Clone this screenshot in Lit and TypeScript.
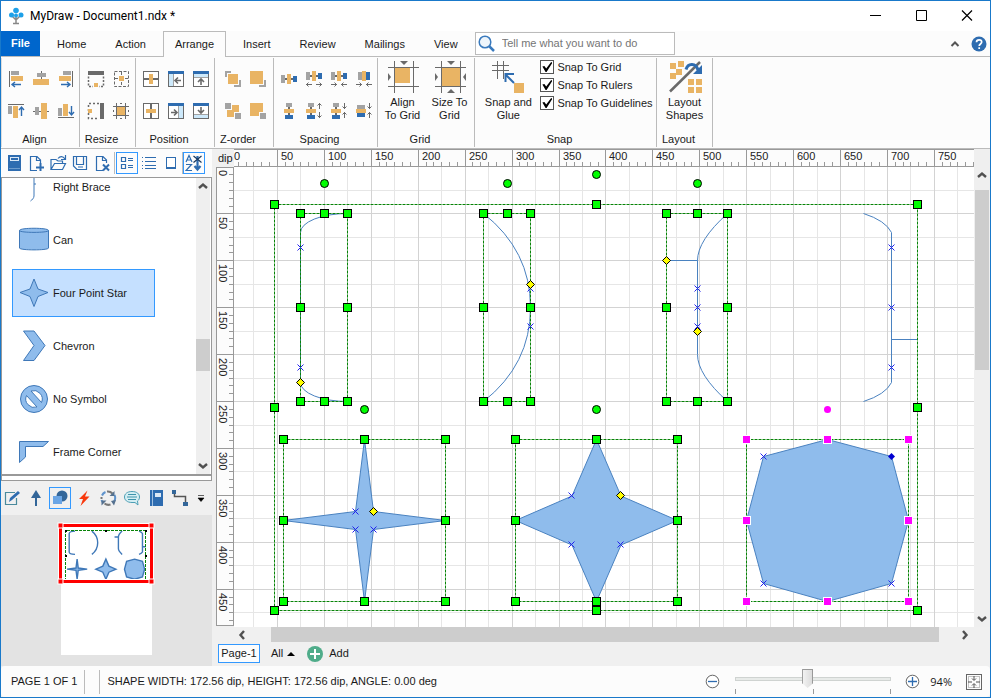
import { LitElement, html, svg, css, nothing } from "lit";
import { customElement, state } from "lit/decorators.js";
import { classMap } from "lit/directives/class-map.js";

const O = "#e9b464";
const G = "#a3a3a3";
const D = "#6a6a6a";
const B = "#2e6cb0";
const L = "#cde9fb";

const r = (x: number, y: number, w: number, h: number, fill: string) =>
  svg`<rect x=${x} y=${y} width=${w} height=${h} fill=${fill}></rect>`;
const line = (d: string, stroke: string, width = 1) =>
  svg`<path d=${d} fill="none" stroke=${stroke} stroke-width=${width}></path>`;
const icon = (size: number, body: unknown) =>
  html`<svg class="ic" width=${size} height=${size} viewBox="0 0 ${size} ${size}" aria-hidden="true">${body}</svg>`;

const frame = (top: boolean) => [
  svg`<rect x="1.5" y="1.5" width="15" height="15" fill="#fff" stroke=${D}></rect>`,
  top ? r(1, 1, 16, 3, B) : nothing,
];

const arrowsOut = line("M1 14.5H7M3.5 12.5l-2 2 2 2M11 14.5H17M14.5 12.5l2 2-2 2", D);
const arrowsIn = line("M1 14.5H7M4.5 12.5l2 2-2 2M11 14.5H17M13.5 12.5l-2 2 2 2", D);
const arrowsOutV = line("M14.5 1V7M12.5 3.5l2-2 2 2M14.5 10V16M12.5 13.5l2 2 2-2", D);
const arrowsInV = line("M14.5 1V7M12.5 4.5l2 2 2-2M14.5 10V16M12.5 12.5l2-2 2 2", D);

const ICONS: Record<string, unknown> = {
  alignLeft: [r(2, 1, 1, 16, D), r(4, 1, 8, 4, G), r(4, 6, 12, 5, O), line("M4.5 14.5H14M8 12l-3 2.5 3 2.5", B, 1.4)],
  alignCenter: [r(9, 1, 1, 14, D), r(5, 3, 9, 4, G), r(1, 9, 16, 6, O)],
  alignRight: [r(15, 1, 1, 16, D), r(6, 1, 8, 4, G), r(2, 6, 12, 5, O), line("M4 14.5H13.5M10 12l3 2.5-3 2.5", B, 1.4)],
  alignTop: [r(1, 2, 16, 1, D), r(1, 4, 4, 8, G), r(6, 4, 5, 12, O), line("M14.5 14V5M12 8l2.5-3L17 8", B, 1.4)],
  alignMiddle: [r(1, 9, 16, 1, D), r(3, 5, 4, 8, G), r(9, 1, 6, 16, O)],
  alignBottom: [r(1, 15, 16, 1, D), r(1, 6, 4, 8, G), r(6, 2, 5, 12, O), line("M14.5 4V13M12 10l2.5 3L17 10", B, 1.4)],
  sameWidth: [r(1, 1, 16, 4, D), svg`<path d="M1.5 6.500V16.500H6M16.500 6.500V16.500H12" fill="none" stroke=${D} stroke-width="1.500" stroke-dasharray="2 1.500"></path>`, r(7, 13, 4, 4, O)],
  sameSize: [svg`<rect x="2.5" y="1.5" width="14" height="15" fill="none" stroke=${D} stroke-dasharray="3 1.5"></rect>
    <path d="M9.5 2V16M3 8.5H16" stroke=${D} stroke-dasharray="3 2"></path>`, r(7, 6, 5, 5, O)],
  sameHeight: [r(13, 1, 4, 16, D), svg`<path d="M12 1.5H1.5V16.5H12" fill="none" stroke=${D} stroke-width="1.5" stroke-dasharray="2 2"></path>`, r(1, 7, 4, 4, O)],
  fitGrid: [line("M1 4.5H17M1 13.5H17M4.5 1V17M13.5 1V17", D), r(5, 5, 8, 8, O), r(8, 1, 2, 1, D), r(8, 16, 2, 1, D), r(1, 8, 1, 2, D), r(16, 8, 1, 2, D)],
  centerH: [frame(false), r(2, 8, 14, 2, D), r(7, 4, 4, 10, O)],
  dockLeft: [frame(true), r(2, 4, 4, 12, L), r(6, 4, 1, 12, G), line("M14 10.5H8M11 7.5l-3 3 3 3", D, 1.6)],
  dockTop: [frame(true), r(2, 4, 14, 3, L), r(2, 7, 14, 1, G), line("M9 15V9M6 12l3-3 3 3", D, 1.6)],
  centerV: [frame(false), r(8, 2, 2, 14, D), r(4, 7, 10, 4, O)],
  dockRight: [frame(true), r(12, 4, 4, 12, L), r(11, 4, 1, 12, G), line("M4 10.5H10M7 7.5l3 3-3 3", D, 1.6)],
  dockBottom: [frame(true), r(2, 13, 14, 3, L), r(2, 12, 14, 1, G), line("M9 5V11M6 8l3 3 3-3", D, 1.6)],
  front: [r(1, 1, 6, 6, G), r(10, 10, 7, 7, G), r(3, 3, 12, 12, "#fcfcfc"), r(4, 4, 10, 10, O)],
  forward: [r(10, 10, 7, 7, G), r(1, 1, 14, 14, "#fcfcfc"), r(1, 1, 13, 13, O)],
  back: [r(3, 3, 12, 12, O), r(0, 0, 8, 8, "#fcfcfc"), r(10, 10, 8, 8, "#fcfcfc"), r(1, 1, 6, 6, G), r(11, 11, 6, 6, G)],
  backward: [r(1, 1, 13, 13, O), r(10, 10, 8, 8, "#fcfcfc"), r(11, 11, 6, 6, G)],
  spaceH: [r(5, 8, 8, 2, D), r(1, 5, 4, 8, G), r(7, 4, 4, 10, O), r(13, 6, 4, 6, B)],
  growH: [r(5, 5, 8, 2, D), r(1, 2, 4, 8, G), r(7, 1, 4, 10, O), r(13, 3, 4, 6, B), arrowsOut],
  shrinkH: [r(5, 5, 8, 2, D), r(1, 2, 4, 8, G), r(7, 1, 4, 10, O), r(13, 3, 4, 6, B), arrowsIn],
  removeH: [r(3, 2, 4, 8, G), r(7, 1, 4, 10, O), r(11, 2, 4, 8, B), arrowsIn],
  spaceV: [r(8, 5, 2, 8, D), r(6, 1, 6, 4, G), r(4, 7, 10, 4, O), r(5, 13, 8, 4, B)],
  growV: [r(5, 5, 2, 8, D), r(3, 1, 6, 4, G), r(1, 7, 10, 4, O), r(2, 13, 8, 4, B), arrowsOutV],
  shrinkV: [r(5, 5, 2, 8, D), r(3, 1, 6, 4, G), r(1, 7, 10, 4, O), r(2, 13, 8, 4, B), arrowsInV],
  removeV: [r(2, 3, 8, 4, G), r(1, 7, 10, 4, O), r(2, 11, 8, 4, B), arrowsInV],
};

const gridLines = line("M1 6.5H32M1 25.5H32M7.5 0V32M26.5 0V32", D);
const BIG: Record<string, unknown> = {
  alignGrid: [gridLines, r(8, 7, 15, 15, O), svg`<path d="M13 0h8l-4 4zM1 12v8l3-4z" fill=${D}></path>`],
  sizeGrid: [gridLines, r(8, 7, 18, 18, O), svg`<path d="M13 0h8l-4 4zM1 12v8l3-4zM32 12v8l-3-4zM13 32h8l-4-4z" fill=${D}></path>`],
  snap: [line("M0 4.5H17M0 9.5H17M5.5 0V18M11.5 0V18", D), line("M22 22L14 14M13.5 21V13H22", B, 2), r(22, 22, 10, 10, O)],
  layout: [r(1, 2, 6, 6, O), r(9, 0, 6, 6, O), r(7, 8, 6, 6, O), r(1, 12, 6, 6, O), r(19, 18, 6, 6, O), r(27, 18, 6, 6, O), r(19, 26, 6, 6, O), r(27, 26, 6, 6, O),
    line("M1 30.5L31 1", D, 2.5), line("M17 8.5C19 1.5 27 2 29 9", B, 3), svg`<path d="M33 4V13H24z" fill=${B}></path>`],
};

const doc = line("M9 15.5H2.5V1.5H9L12.5 5V8M8.5 1.5V5.5H12.5", B, 1.2);
const TOOLS: Record<string, unknown> = {
  book: [r(2, 0, 13, 16, B), r(4, 2, 9, 4, "#dbe8f5"), r(5, 3, 7, 2, B), r(3, 13, 11, 1, "#6d9bcc")],
  newDoc: [doc, line("M8 12.5H16M12.5 8V16", B, 2)],
  open: [line("M1 14.5V4.5H6L8 6H12.5V8M1 14.5L4.5 8.5H15.5L12.5 14.5zM8 3.5C10 1 13 1 15 4M15.5 0V4.5H11", B, 1.2)],
  save: [line("M1.5 1.5H14.5V14.5H5L1.5 11zM4.5 1.5V9.5H11.5V1.5M6 12H11", B, 1.2)],
  closeDoc: [doc, line("M9 9.5L15 15.5M15 9.5L9 15.5", B, 2)],
  details: [line("M2.5 2.5h4v4h-4zM2.5 9.5h4v4h-4z", B, 1.2), line("M9 3.5h5M9 5.5h5M9 10.5h5M9 12.5h5", B)],
  list: [line("M4 2.5h11M4 6.5h11M4 10.5h11M4 13.5h11", B, 1), line("M1 2.5h1M1 6.5h1M1 10.5h1M1 13.5h1", B, 1)],
  square: [r(3, 2, 10, 12, B), r(4, 3, 8, 9, "#fff")],
  sort: [line("M0 7L3 0.500L6 7M1 5H5M0 9.500H5.500L0 15.500H6", B, 1.2), line("M11.500 1V14M8.500 11l3 3.500 3-3.500", B, 2.2), line("M7.500 1l8 6.500M15.500 1L7.500 7.500", "#17375e", 1.2)],
  edit: [line("M11 2.5H1.5V14.5H12.5V8", "#4a8a9c", 1.2), svg`<path d="M5 12l1-4 8-7 2 2-8 7z" fill=${B}></path>`],
  pointer: [svg`<path d="M8 0l5 8H3z" fill="#336699"></path>`, r(7, 5, 2, 11, "#336699")],
  shapes: [svg`<circle cx="10" cy="6" r="5.500" fill="#336699"></circle>`, r(1, 6, 9, 8, "#6aa5e5")],
  flash: [svg`<path d="M11.500 0.500L3 9h4L4.500 16l9-9.500H9z" fill="#f8380c"></path>`],
  cycle: [svg`<path d="M2 5.500A6.500 6.500 0 0 1 5.500 2M14.500 5A6.500 6.500 0 0 1 14 11.500M1.500 10A6.500 6.500 0 0 0 3 12.500" fill="none" stroke="#5f93cc" stroke-width="2"></path>
    <path d="M7 1.500A6.500 6.500 0 0 1 12.500 3.500M10.500 14.500A6.500 6.500 0 0 1 4.500 13.500M1.500 7V9" fill="none" stroke="#777" stroke-width="2"></path>
    <path d="M14.500 1V6H9.500zM16 10L14 15.500 11 11zM1.500 15.500V10.500H6.500z" fill="#55718f"></path>`],
  chat: [svg`<path d="M8 1.500C3 1.500.5 4 .5 7S3 12.500 8 12.500h3l3 2.500-.5-4C15 10 15.500 8.500 15.500 7 15.500 4 13 1.500 8 1.500z" fill="#d4eef3" stroke="#4e9fb5"></path>`, line("M4 4.500h8M3 7h10M4 9.500h8", "#3d93ab", 1.2)],
  note: [r(2, 0, 13, 16, B), r(4, 0, 1, 16, "#9fc0e2"), r(7, 3, 6, 4, "#dbe8f5")],
  link: [line("M2.500 2.500V6.500H13.500V13.500", "#555", 1.5), r(0, 0, 4, 4, "#336699"), r(11, 12, 5, 4, "#336699")],
};

const SKY = "#8fbcec";
const EDGE = "#3f78b8";
const STENCIL: { name: string; art: unknown }[] = [
  { name: "Right Brace", art: line("M13 2C14 4 15 6 15 8V15H17M15 15V27C15 29 13 31 11.500 32", EDGE) },
  { name: "Can", art: svg`<path d="M.5 8.500C.5 5.500 29.500 5.500 29.500 8.500V26C29.500 28.500.5 28.500.5 26z" fill=${SKY} stroke=${EDGE}></path><path d="M.5 8.500C.5 11 29.500 11 29.500 8.500" fill="none" stroke=${EDGE}></path>` },
  { name: "Four Point Star", art: svg`<path d="M15 4L19 14 29 17.500 19 21.500 15 31.500 11 21.500 1 17.500 11 14z" fill=${SKY} stroke=${EDGE}></path>` },
  { name: "Chevron", art: svg`<path d="M4.500 3H15L26 17.500 15 32.500H4.500L15 17.500z" fill=${SKY} stroke=${EDGE}></path>` },
  { name: "No Symbol", art: svg`<circle cx="15" cy="18" r="13.500" fill=${SKY} stroke=${EDGE}></circle>
    <path d="M12 10A8.500 8.500 0 0 1 22.500 21.500zM7.500 14.500A8.500 8.500 0 0 0 18 26z" fill="#fff" stroke=${EDGE}></path>` },
  { name: "Frame Corner", art: svg`<path d="M.5 7.500H29.500L24 12.500H6.500V23L.5 28.500z" fill=${SKY} stroke=${EDGE}></path>` },
];

/* Drawing surface geometry */
const STEP = 46.93;
const ORIGIN_X = -4;
const ORIGIN_Y = -0.6;

type P = [number, number];
const poly = (pts: P[]) => "M" + pts.map(([x, y]) => `${x} ${y}`).join("L") + "Z";
const star = (cx: number, cy: number, R: number, i: number) =>
  poly([[cx, cy - R], [cx + i, cy - i], [cx + R, cy], [cx + i, cy + i], [cx, cy + R], [cx - i, cy + i], [cx - R, cy], [cx - i, cy - i]]);

const OPEN_PATHS = [
  "M113 46A47 19 0 0 0 66 65V215A47 19 0 0 0 113 234",
  "M249 46Q296 83 296 140Q296 197 249 234",
  "M493 46Q463 73 463 93V187Q463 207 493 234M432 93H463",
  "M629 46Q651 53 657 65V215Q651 227 629 234M657 172H683",
];
const SOLID_PATHS = [
  star(130, 353, 81, 9),
  star(362, 353, 81, 24.5),
  poly([[593, 272], [657, 289], [674, 353], [657, 416], [593, 434], [529, 416], [512, 353], [529, 289]]),
];
const drawing = () => svg`
  ${OPEN_PATHS.map((d) => svg`<path class="open" d=${d}></path>`)}
  ${SOLID_PATHS.map((d) => svg`<path class="solid" d=${d}></path>`)}`;

const BOXES = [[40, 37, 643, 406], [66, 46, 47, 188], [249, 46, 47, 188], [432, 46, 61, 188], [49, 272, 162, 162], [281, 272, 162, 162], [512, 272, 162, 162]];
const HANDLES: P[] = [
  [40, 37], [362, 37], [683, 37], [40, 240], [683, 240], [40, 443], [362, 443], [683, 443],
  [66, 46], [90, 46], [113, 46], [66, 140], [113, 140], [66, 234], [90, 234], [113, 234],
  [249, 46], [273, 46], [296, 46], [249, 140], [296, 140], [249, 234], [273, 234], [296, 234],
  [432, 46], [463, 46], [493, 46], [432, 140], [493, 140], [432, 234], [463, 234], [493, 234],
  [49, 272], [130, 272], [211, 272], [49, 353], [211, 353], [49, 434], [130, 434], [211, 434],
  [281, 272], [362, 272], [443, 272], [281, 353], [443, 353], [281, 434], [362, 434], [443, 434],
];
const PINK: P[] = [[512, 272], [593, 272], [674, 272], [512, 353], [674, 353], [512, 434], [593, 434], [674, 434]];
const KNOBS: P[] = [[90, 16], [273, 16], [362, 7], [463, 16], [130, 242], [362, 242]];
const CROSSES: P[] = [
  [66, 80], [66, 200], [296, 121], [296, 159], [463, 121], [463, 140], [463, 159],
  [657, 80], [657, 140], [657, 200], [121, 344], [121, 362], [139, 362],
  [337, 328], [337, 377], [386, 377], [529, 289], [529, 416], [657, 416],
];
const DIAMONDS: P[] = [[66, 215], [296, 117], [432, 93], [463, 164], [139, 344], [386, 328]];

@customElement("app-root")
export class AppRoot extends LitElement {
  @state() private viewW = window.innerWidth - 251;
  @state() private viewH = window.innerHeight - 238;

  private onResize = () => {
    this.viewW = window.innerWidth - 251;
    this.viewH = window.innerHeight - 238;
  };
  connectedCallback() {
    super.connectedCallback();
    window.addEventListener("resize", this.onResize);
  }
  disconnectedCallback() {
    window.removeEventListener("resize", this.onResize);
    super.disconnectedCallback();
  }

  static styles = css`
    :host {
      display: flex; flex-direction: column; box-sizing: border-box; height: 100vh; overflow: hidden;
      border: 1px solid #1979ca; background: #f0f0f0; color: #1a1a1a;
      font: 11px/13px "Liberation Sans", Arial, sans-serif;
    }
    *, *::before { box-sizing: border-box; }
    button { font: inherit; color: inherit; background: none; border: 0; padding: 0; margin: 0; border-radius: 0; }
    .ic { display: block; flex: none; }
    .title { display: flex; align-items: center; height: 30px; background: #fff; padding-left: 6px; flex: none; }
    .title h1 { margin: 0 auto 0 5px; font: 12px/16px Roboto, "Noto Sans", sans-serif; color: #000; }
    .win { width: 46px; height: 30px; display: grid; place-items: center; }
    .tabs { display: flex; gap: 1px; height: 26px; background: #fcfcfc; border-bottom: 1px solid #bbb; flex: none; align-items: stretch; }
    .tab { padding: 0 14px; height: 26px; }
    .file { background: #0066cc; color: #fff; font-weight: bold; padding: 0 10px; margin-right: 2px; height: 25px; }
    .tab.on { margin: 0 2px; padding: 0 11px; background: #fcfcfc; border: 1px solid #bbb; border-bottom: 0; }
    .search { display: flex; align-items: center; gap: 7px; width: 200px; height: 23px; margin: 1px auto 0 2px; padding-left: 2px; border: 1px solid #bbb; background: #fff; }
    .search input { flex: 1; min-width: 0; border: 0; outline: 0; padding: 0; background: none; font: inherit; }
    .search input::placeholder { color: #757575; opacity: 1; }
    .tabend { display: flex; align-items: center; gap: 10px; padding-right: 3px; }
    .ribbon { display: flex; height: 92px; padding-top: 1px; background: #fcfcfc; border-bottom: 1px solid #bbb; flex: none; }
    .group { display: flex; flex-direction: column; border-right: 1px solid #bbb; margin-bottom: 1px; flex: none; }
    .group:first-child { border-left: 1px solid #ddd; }
    .w79 { width: 79px; } .w56 { width: 56px; } .w59 { width: 59px; } .w104 { width: 104px; } .w97 { width: 97px; } .w182 { width: 182px; }
    .gbody { flex: 1; display: flex; justify-content: center; padding-top: 3px; }
    .label { text-align: center; padding: 0 12px 1px 0; white-space: nowrap; }
    .cells { display: grid; grid-template-rows: 32px 32px; padding: 2px 0 0 2px; }
    .group:first-child .cells { padding-left: 0; }
    .cells button { display: grid; place-items: center; }
    .c2 { grid-template-columns: repeat(2, 25px); } .c3 { grid-template-columns: repeat(3, 25px); } .c4 { grid-template-columns: repeat(4, 25px); }
    .big { display: flex; flex-direction: column; align-items: center; gap: 3px; width: 47px; white-space: nowrap; }
    .big .ic { overflow: visible; }
    .wide { width: 60px; }
    .checks { display: flex; flex-direction: column; gap: 4px; margin: -1px 0 0 2px; }
    .check { display: flex; align-items: center; gap: 3px; height: 14px; white-space: nowrap; }
    .check input { appearance: none; width: 14px; height: 14px; margin: 0; border: 1px solid #555; background: #fff; display: grid; place-items: center; }
    .check input:checked::before { content: ""; width: 10px; height: 10px; background: #000; clip-path: polygon(0 45%, 20% 40%, 38% 65%, 88% 0, 100% 8%, 42% 100%, 32% 100%); }
    .main { flex: 1; min-height: 0; display: grid; grid-template-columns: 211px minmax(0, 1fr); gap: 4px; }
    .side { display: flex; flex-direction: column; min-height: 0; }
    .stools { display: flex; align-items: center; height: 28px; background: #fcfcfc; flex: none; padding-left: 2px; }
    .stools button, .btools button { display: grid; place-items: center; width: 22px; height: 22px; flex: none; }
    .stools .boxed, .btools .boxed { border: 1px solid #3399ff; }
    .sep { width: 1px; height: 22px; background: #bbb; margin: 0 1px; }
    .stools .sep:nth-last-child(2) { margin: 0; }
    .listbox { flex: 1; min-height: 0; display: flex; background: #fff; border: 1px solid #999; border-bottom-width: 2px; }
    .scroller { flex: 1; overflow: hidden; }
    .stencil { list-style: none; margin: -15px 0 0; padding: 0 0 0 10px; display: flex; flex-direction: column; gap: 5px; }
    .item { display: flex; align-items: center; gap: 4px; width: 143px; height: 48px; padding-left: 6px; border: 1px solid transparent; text-align: left; }
    .item.on { background: #c5e0ff; border-color: #3399ff; }
    .vbar { display: flex; flex-direction: column; align-items: center; width: 14px; margin-right: 1px; background: #efefef; }
    .vbar button { height: 16px; width: 14px; display: grid; place-items: center; flex: none; }
    .thumb { background: #cdcdcd; }
    .vbar .sp1 { flex: 145 0 0; } .vbar .th1 { flex: 32 0 0; width: 100%; } .vbar .sp2 { flex: 87 0 0; }
    .strip { height: 5px; background: #fff; border: 1px solid #999; border-top: 0; flex: none; }
    .btools { display: flex; align-items: center; gap: 2px; height: 34px; flex: none; }
    .btools button:last-child { width: 16px; }
    .nav { height: 151px; flex: none; background: #e3e3e3; display: flex; justify-content: center; padding: 5px 2px 0 0; }
    .work { display: grid; min-width: 0; min-height: 0; grid-template-columns: 18px minmax(0, 1fr) 16px; grid-template-rows: 18px minmax(0, 1fr) 15px 24px; }
    .corner { padding: 3px 0 0 2px; }
    .work svg.fill { display: block; width: 100%; height: 100%; }
    .tall { grid-row: 1 / 3; grid-column: 3; width: 16px; margin: 0; padding: 18px 1px 0 1px; }
    .tall .th2 { flex: 179 0 0; align-self: stretch; margin-top: 7px; } .tall .sp3 { flex: 239 0 0; }
    .hbar { grid-column: 1 / 4; display: flex; align-items: stretch; }
    .hbar button { width: 51px; display: grid; place-items: center; flex: none; }
    .hbar .fillbar { flex: 1; margin-left: 4px; }
    .pages { grid-column: 1 / 4; display: flex; align-items: center; padding: 0 0 1px 2px; }
    .page { height: 19px; width: 42px; border: 1px solid #3399ff; background: #fcfcfc; }
    .all { display: flex; align-items: center; gap: 4px; margin-left: 11px; }
    .add { display: flex; align-items: center; gap: 6px; margin-left: 12px; }
    .status { display: flex; align-items: center; height: 31px; flex: none; background: #fcfcfc; padding: 0 8px 0 10px; border-radius: 4px; }
    .status .sep { height: 24px; margin: 0 7px; }
    .zoom { display: flex; align-items: center; margin-left: auto; }
    .range { width: 156px; margin: 0 14px 0 15px; display: flex; flex-direction: column; }
    .range input { appearance: none; width: 100%; height: 19px; margin: 0; background: none; display: block; }
    .range input::-webkit-slider-runnable-track { height: 4px; background: #e8ebe9; border: 1px solid #cfd3d1; }
    .range input::-webkit-slider-thumb { appearance: none; width: 11px; height: 19px; margin-top: -9px; background: linear-gradient(90deg, #999 1px, #f2f2f2 1px, #dcdcdc 10px, #999 10px); border-top: 1px solid #999; clip-path: polygon(0 0, 100% 0, 100% 75%, 50% 100%, 0 75%); }
    .ticks { display: flex; justify-content: space-between; }
    .ticks i { width: 1px; height: 5px; background: #999; }
    .pct { font: 11px/16px "Open Sans", "Noto Sans", sans-serif; margin: 0 14px 0 10px; }
    .open, .solid { fill: none; stroke: #4a82c0; stroke-width: 1; vector-effect: non-scaling-stroke; }
    .nav .open, .nav .solid { stroke: #3f78b8; stroke-width: 1.4; }
    .solid, .nav .solid { fill: #8fbcec; }
    .dash { fill: none; stroke: #078307; stroke-dasharray: 3 1; }
    .rl { font: 11px "Liberation Sans", Arial, sans-serif; fill: #222; }
  `;

  private group(label: string, width: string, body: unknown) {
    return html`<section class="group ${width}" aria-label=${label}><div class="gbody">${body}</div><div class="label">${label}</div></section>`;
  }
  private cells(cols: string, names: string[]) {
    return html`<div class="cells ${cols}">${names.map((n) => html`<button aria-label=${n}>${icon(18, ICONS[n])}</button>`)}</div>`;
  }
  private bigBtn(name: string, a: string, b: string, cls = "") {
    return html`<button class="big ${cls}">${icon(32, BIG[name])}<span>${a}<br />${b}</span></button>`;
  }
  private tool(name: string, boxed = false) {
    return html`<button class=${classMap({ boxed })} aria-label=${name}>${icon(18, svg`<g transform="translate(1 1)">${TOOLS[name]}</g>`)}</button>`;
  }
  private chev(d: string) {
    return icon(10, line(d, "#505050", 2.4));
  }

  private hRuler() {
    const ticks: unknown[] = [];
    const n = Math.floor((this.viewW - ORIGIN_X) / STEP);
    for (let i = 0; i <= (n + 1) * 6; i++) {
      const x = Math.round(ORIGIN_X + (i * STEP) / 6);
      if (x < 1 || x > this.viewW) continue;
      ticks.push(i % 6 === 0 ? r(x, 1, 1, 16, "#999") : r(x, 13, 1, 4, "#999"));
    }
    for (let k = 0; k <= n; k++) {
      const x = Math.round(ORIGIN_X + k * STEP) + 4;
      if (x + 20 > this.viewW) continue;
      ticks.push(svg`<text class="rl" x=${x} y="11">${k * 50}</text>`);
    }
    return html`<svg class="fill">${svg`<rect width="100%" height="18" fill="#fcfcfc"></rect><rect width="100%" height="1" fill="#999"></rect><rect y="17" width="100%" height="1" fill="#999"></rect>`}${ticks}</svg>`;
  }
  private vRuler() {
    const ticks: unknown[] = [];
    const n = Math.floor(this.viewH / STEP);
    for (let i = 1; i <= (n + 1) * 6; i++) {
      const y = Math.round(ORIGIN_Y + (i * STEP) / 6);
      if (y > this.viewH - 4) continue;
      ticks.push(i % 6 === 0 ? r(1, y, 16, 1, "#999") : r(13, y, 4, 1, "#999"));
    }
    for (let k = 0; k <= n; k++) {
      const y = Math.round(ORIGIN_Y + k * STEP) + 4;
      if (y + 20 > this.viewH) continue;
      ticks.push(svg`<text class="rl" transform="translate(3 ${y}) rotate(90)">${k * 50}</text>`);
    }
    const h = this.viewH - 1;
    return html`<svg class="fill">${svg`<rect x=".5" y=".5" width="17" height=${h - 1} fill="#fcfcfc" stroke="#999"></rect>`}${ticks}</svg>`;
  }
  private canvas() {
    const minor: unknown[] = [];
    const major: unknown[] = [];
    for (let i = 1; i * STEP * 0.5 < this.viewW + 20; i++) {
      const x = Math.round(ORIGIN_X + i * STEP * 0.5);
      (i % 2 ? minor : major).push(r(x, 0, 1, this.viewH, i % 2 ? "#e6e6e6" : "#d3d3d3"));
    }
    for (let i = 1; i * STEP * 0.5 < this.viewH + 20; i++) {
      const y = Math.round(ORIGIN_Y + i * STEP * 0.5);
      (i % 2 ? minor : major).push(r(0, y, this.viewW, 1, i % 2 ? "#e6e6e6" : "#d3d3d3"));
    }
    return html`<svg class="fill" role="img" aria-label="Drawing">${svg`
      <rect width="100%" height="100%" fill="#fff"></rect>${minor}${major}
      <g transform="translate(.5 .5)">
        ${drawing()}
        ${BOXES.map(([x, y, w, h]) => svg`<rect class="dash" x=${x} y=${y} width=${w} height=${h}></rect>`)}
        ${CROSSES.map(([x, y]) => svg`<path d="M${x - 3} ${y - 3}l6 6m0-6l-6 6" stroke="#2222ee" fill="none"></path>`)}
        ${HANDLES.map(([x, y]) => svg`<rect x=${x - 4} y=${y - 4} width="8" height="8" fill="#0f0" stroke="#000"></rect>`)}
        ${PINK.map(([x, y]) => svg`<rect x=${x - 4} y=${y - 4} width="8" height="8" fill="#f0f" stroke="#fff"></rect>`)}
        ${KNOBS.map(([x, y]) => svg`<circle cx=${x} cy=${y} r="4" fill="#0f0" stroke="#000"></circle>`)}
        <circle cx="593" cy="242" r="3.500" fill="#f0f"></circle>
        ${DIAMONDS.map(([x, y]) => svg`<path d="M${x} ${y - 4}l4 4-4 4-4-4z" fill="#ff0" stroke="#000"></path>`)}
        <path d="M657 285.500l3.500 3.500-3.500 3.500-3.500-3.500z" fill="#0000d0"></path>
      </g>`}</svg>`;
  }
  private navigator() {
    return html`<svg width="100" height="140" viewBox="0 0 100 140" role="img" aria-label="Page overview">${svg`
      <rect x="5" y="4" width="91" height="131" fill="#fff"></rect>
      <g transform="translate(5 5.400) scale(.124)">${drawing()}</g>
      <path d="M9.500 61V10.500H89.500V61" class="dash"></path>
      ${[[9, 10], [49, 10], [89, 10], [9, 35], [89, 35]].map(([x, y]) => r(x, y, 2, 2, "#000"))}
      <rect x="4.500" y="5.500" width="91" height="56" fill="none" stroke="#fff" stroke-width="5"></rect>
      <rect x="4.500" y="5.500" width="91" height="56" fill="none" stroke="#f00" stroke-width="3"></rect>
      ${[[4.5, 5.5], [95.5, 5.5], [4.5, 61.5], [95.5, 61.5]].map(([x, y]) => svg`<rect x=${x - 2.5} y=${y - 2.5} width="5" height="5" fill="#f00" stroke="#fff"></rect>`)}`}</svg>`;
  }

  render() {
    return html`
      <header class="title">
        ${icon(18, svg`<path d="M9 9V16M9 13L5 9M9 13L13 9M6 16.500H12" fill="none" stroke="#888" stroke-width="1.500"></path>
          <g fill="#1ea0e8"><circle cx="9" cy="3.500" r="2.800"></circle><circle cx="4.500" cy="8" r="2.500"></circle><circle cx="14" cy="8" r="2.500"></circle><circle cx="9" cy="8.500" r="2"></circle></g>`)}
        <h1>MyDraw - Document1.ndx *</h1>
        <button class="win" aria-label="Minimize">${icon(12, line("M1 5.500H12", "#000"))}</button>
        <button class="win" aria-label="Maximize">${icon(12, line("M1.500 .5H11.500V10.500H1.500z", "#000"))}</button>
        <button class="win" aria-label="Close">${icon(12, line("M1 .5L11 10.500M11 .5L1 10.500", "#000", 1.2))}</button>
      </header>
      <nav class="tabs">
        <button class="tab file">File</button>
        ${["Home", "Action", "Arrange", "Insert", "Review", "Mailings", "View"].map((t) => html`<button class=${classMap({ tab: true, on: t === "Arrange" })}>${t}</button>`)}
        <label class="search">
          ${icon(17, svg`<circle cx="7" cy="7" r="5.800" fill="#eef5fb" stroke="#3a7abd" stroke-width="1.500"></circle><path d="M11 11l5 5" stroke="#3a7abd" stroke-width="2.500"></path>`)}
          <input type="text" aria-label="Tell me what you want to do" placeholder="Tell me what you want to do" />
        </label>
        <div class="tabend">
          <button aria-label="Collapse ribbon">${icon(12, line("M2.500 8L6 4.500 9.500 8", "#555", 2))}</button>
          <button aria-label="Help">${icon(16, svg`<circle cx="8" cy="8" r="7.500" fill="#2e6cb0"></circle><path d="M5.500 6.300C5.500 3 10.700 3.200 10.700 6.100 10.700 8 8.200 8 8.200 10M8.200 11.200V13" fill="none" stroke="#fff" stroke-width="1.700"></path>`)}</button>
        </div>
      </nav>
      <div class="ribbon">
        ${this.group("Align", "w79", this.cells("c3", ["alignLeft", "alignCenter", "alignRight", "alignTop", "alignMiddle", "alignBottom"]))}
        ${this.group("Resize", "w56", this.cells("c2", ["sameWidth", "sameSize", "sameHeight", "fitGrid"]))}
        ${this.group("Position", "w79", this.cells("c3", ["centerH", "dockLeft", "dockTop", "centerV", "dockRight", "dockBottom"]))}
        ${this.group("Z-order", "w59", this.cells("c2", ["front", "forward", "back", "backward"]))}
        ${this.group("Spacing", "w104", this.cells("c4", ["spaceH", "growH", "shrinkH", "removeH", "spaceV", "growV", "shrinkV", "removeV"]))}
        ${this.group("Grid", "w97", html`${this.bigBtn("alignGrid", "Align", "To Grid")}${this.bigBtn("sizeGrid", "Size To", "Grid")}`)}
        ${this.group("Snap", "w182", html`${this.bigBtn("snap", "Snap and", "Glue", "wide")}
          <div class="checks">${["Snap To Grid", "Snap To Rulers", "Snap To Guidelines"].map((t) => html`<label class="check"><input type="checkbox" checked />${t}</label>`)}</div>`)}
        ${this.group("Layout", "w56", this.bigBtn("layout", "Layout", "Shapes"))}
      </div>
      <div class="main">
        <aside class="side">
          <div class="stools">
            ${["book", "newDoc", "open", "save", "closeDoc"].map((n) => this.tool(n))}<span class="sep"></span>
            ${this.tool("details", true)}${this.tool("list")}${this.tool("square")}<span class="sep"></span>${this.tool("sort", true)}
          </div>
          <div class="listbox">
            <div class="scroller"><ul class="stencil">
              ${STENCIL.map((s) => html`<li><button class=${classMap({ item: true, on: s.name === "Four Point Star" })}>
                <svg class="ic" width="30" height="36" viewBox="0 0 30 36">${s.art}</svg>${s.name}</button></li>`)}
            </ul></div>
            <div class="vbar"><button aria-label="Up">${this.chev("M1 7L5 3.500 9 7")}</button><span class="sp1"></span><span class="thumb th1"></span><span class="sp2"></span><button aria-label="Down">${this.chev("M1 3L5 6.500 9 3")}</button></div>
          </div>
          <div class="strip"></div>
          <div class="btools">
            ${["edit", "pointer", "shapes", "flash", "cycle", "chat", "note", "link"].map((n) => this.tool(n, n === "shapes"))}
            <button aria-label="More">${icon(8, svg`<path d="M1 1.500H7M1 4h6L4 7.500z" fill="#000" stroke="#000" stroke-width=".6"></path>`)}</button>
          </div>
          <div class="nav">${this.navigator()}</div>
        </aside>
        <main class="work">
          <div class="corner">dip</div>
          <div>${this.hRuler()}</div>
          <div class="vbar tall"><button aria-label="Scroll up">${this.chev("M1 7L5 3.500 9 7")}</button><span class="thumb th2"></span><span class="sp3"></span><button aria-label="Scroll down">${this.chev("M1 3L5 6.500 9 3")}</button></div>
          <div>${this.vRuler()}</div>
          <div>${this.canvas()}</div>
          <div class="hbar"><button aria-label="Scroll left">${this.chev("M7 1L3.500 5 7 9")}</button><span class="thumb fillbar"></span><button aria-label="Scroll right">${this.chev("M3 1L6.500 5 3 9")}</button></div>
          <div class="pages">
            <button class="page">Page-1</button>
            <button class="all">All ${icon(8, svg`<path d="M0 6L4 2 8 6z" fill="#000"></path>`)}</button>
            <button class="add">${icon(16, svg`<circle cx="8" cy="8" r="8" fill="#4fac8a"></circle><path d="M3 8H13M8 3V13" stroke="#fff" stroke-width="2"></path>`)}Add</button>
          </div>
        </main>
      </div>
      <footer class="status">
        <span>PAGE 1 OF 1</span><span class="sep"></span><span class="sep"></span>
        <span>SHAPE WIDTH: 172.56 dip, HEIGHT: 172.56 dip, ANGLE: 0.00 deg</span>
        <div class="zoom">
          <button aria-label="Zoom out">${icon(15, svg`<circle cx="7.500" cy="7.500" r="6.300" fill="#fff" stroke="#666"></circle><path d="M3 7.500H12" stroke="#2e6cb0" stroke-width="1.300"></path>`)}</button>
          <div class="range"><input type="range" aria-label="Zoom" min="0" max="100" value="46" /><div class="ticks"><i></i><i></i><i></i></div></div>
          <button aria-label="Zoom in">${icon(15, svg`<circle cx="7.500" cy="7.500" r="6.300" fill="#fff" stroke="#666"></circle><path d="M3 7.500H12M7.500 3V12" stroke="#2e6cb0" stroke-width="1.300"></path>`)}</button>
          <span class="pct">94%</span>
          <button aria-label="Fit to window">${icon(16, svg`<rect x=".5" y=".5" width="15" height="15" fill="none" stroke="#666"></rect><rect x="2.500" y="2.500" width="11" height="11" fill="none" stroke="#888" stroke-dasharray="1 1"></rect><path d="M8 2V6M6 4.500L8 6.500 10 4.500M2 8H6M8 14V10M6 11.500L8 9.500 10 11.500M14 8H10" fill="none" stroke="#555"></path>`)}</button>
        </div>
      </footer>`;
  }
}
